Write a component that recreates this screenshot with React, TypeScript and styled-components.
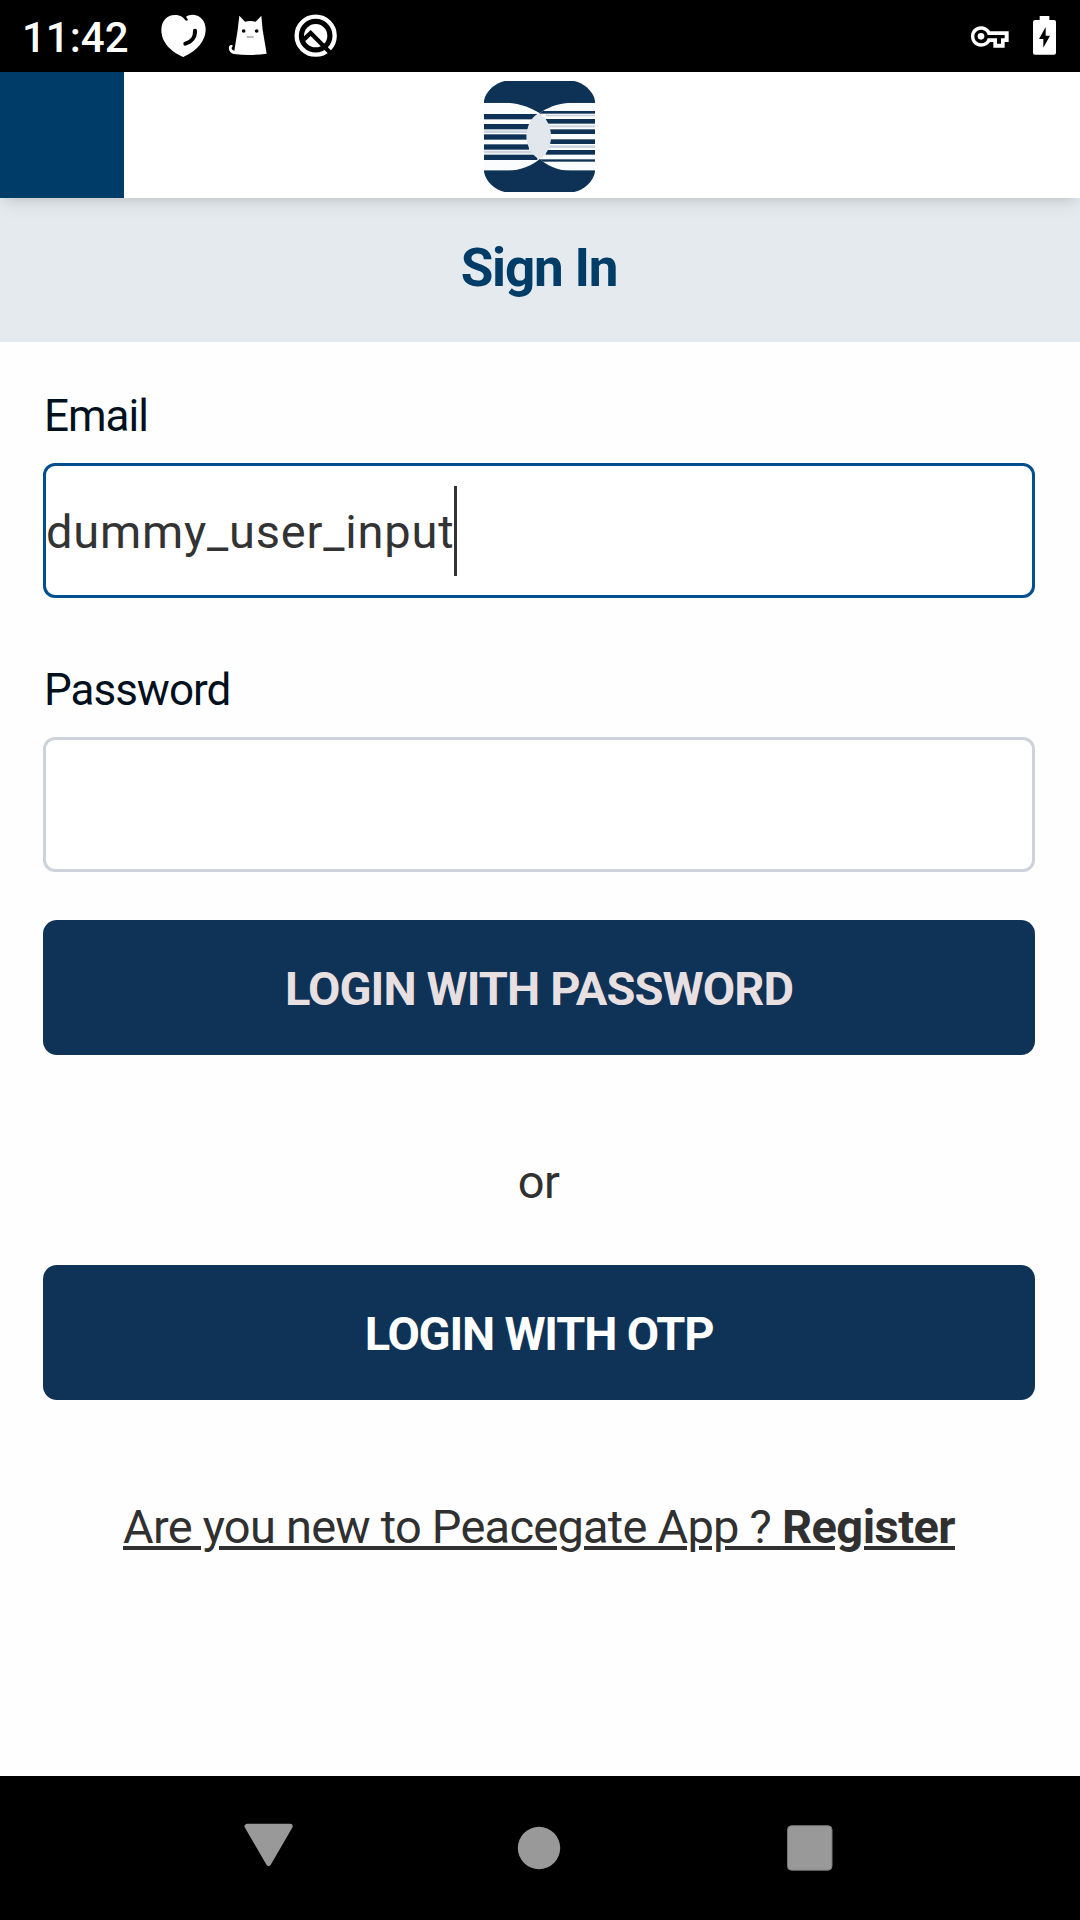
import React from "react";
import styled, { createGlobalStyle } from "styled-components";

const navy = "#0e3357";
const brand = "#003c68";

const GlobalStyle = createGlobalStyle`
  *, *::before, *::after { box-sizing: border-box; }
  body { margin: 0; background: #fff; }
`;

const Screen = styled.div`
  display: flex;
  flex-direction: column;
  width: 1080px;
  height: 1920px;
  overflow: hidden;
  background: #fefefe;
  color: #303030;
  font-family: Roboto, "Open Sans", sans-serif;
`;

const StatusBar = styled.div`
  display: flex;
  align-items: center;
  justify-content: space-between;
  flex: none;
  height: 72px;
  padding: 0 23px 0 22px;
  background: #000;
`;

const StatusGroup = styled.div<{ $gap: number }>`
  display: flex;
  align-items: center;
  gap: ${(p) => p.$gap}px;
`;

const Clock = styled.span`
  width: 114px;
  padding-top: 3px;
  color: #fff;
  font: 500 42px/50px Roboto, sans-serif;
`;

const Glyph = styled.svg`
  display: block;
  flex: none;
  overflow: visible;
`;

const Header = styled.header`
  position: relative;
  z-index: 1;
  display: grid;
  grid-template-columns: 124.4px 1fr 124.4px;
  flex: none;
  height: 126px;
  background: #fff;
  box-shadow: 0 10px 16px -3px rgba(0, 0, 0, 0.08), 0 5px 10px -5px rgba(0, 0, 0, 0.1);
`;

const MenuBlock = styled.div`
  background: ${brand};
`;

const LogoSlot = styled.div`
  display: flex;
  justify-content: center;
  padding: 9px 1px 0 0;
`;

const Banner = styled.div`
  display: flex;
  align-items: center;
  justify-content: center;
  flex: none;
  height: 144px;
  padding: 0 2px 4px 0;
  background: #e5eaee;
`;

const Title = styled.h1`
  margin: 0;
  color: ${brand};
  font-size: 53px;
  font-weight: 700;
  letter-spacing: -1.2px;
  line-height: 70px;
`;

const Form = styled.main`
  display: flex;
  flex-direction: column;
  flex: 1;
  padding: 47px 45px 0 43px;
`;

const Field = styled.div`
  display: flex;
  flex-direction: column;
  gap: 20px;
  & + & { margin-top: 65px; }
`;

const Label = styled.label`
  height: 54px;
  padding-left: 1px;
  color: #00101d;
  font-size: 44px;
  letter-spacing: -1px;
  line-height: 54px;
`;

const InputBox = styled.div<{ $focused?: boolean }>`
  display: flex;
  align-items: center;
  height: 135px;
  border: 3px solid ${(p) => (p.$focused ? "#004f90" : "#ced3db")};
  border-radius: 12px;
  background: #fff;
`;

const Value = styled.span`
  width: 408px;
  padding-top: 2px;
  color: #333;
  font-size: 47px;
  letter-spacing: 0.8px;
  line-height: 64px;
  white-space: nowrap;
`;

const Caret = styled.span`
  width: 3px;
  height: 90px;
  background: #333;
`;

const Button = styled.button<{ $color: string; $tracking: number }>`
  height: 135px;
  padding: 1px 0 0;
  border: 0;
  border-radius: 14px;
  background: ${navy};
  color: ${(p) => p.$color};
  font-family: inherit;
  font-size: 47px;
  font-weight: 700;
  letter-spacing: ${(p) => p.$tracking}px;
`;

const LoginButton = styled(Button)`
  margin-top: 48px;
`;

const Divider = styled.div`
  margin: 97px 0 53px;
  padding-right: 1px;
  font-size: 47px;
  letter-spacing: -0.5px;
  line-height: 60px;
  text-align: center;
`;

const SignUp = styled.a`
  margin-top: 97px;
  font-size: 47px;
  letter-spacing: -0.76px;
  line-height: 60px;
  text-align: center;
  white-space: nowrap;
  text-decoration: underline;
  text-decoration-thickness: 4px;
  text-underline-offset: 3px;
`;

const Strong = styled.b`
  font-weight: 700;
  letter-spacing: -0.55px;
`;

const NavBar = styled.nav`
  display: flex;
  justify-content: space-between;
  flex: none;
  height: 144px;
  padding: 46px 247px 0 243px;
  background: #000;
`;

const Logo = () => (
  <Glyph width="111" height="111" viewBox="72 33 333 333">
    <defs>
      <filter id="soft" x="0" y="0" width="1" height="1"><feGaussianBlur stdDeviation="2" /></filter>
      <clipPath id="tile"><path d="M134 33H343C370 38 400 63 405 92V306C400 335 370 361 343 366H134C107 361 77 335 72 306V92C77 63 107 38 134 33Z" /></clipPath>
      <clipPath id="left"><path d="M72 98H142C182 100 220 116 240 130L205 200L240 266C220 284 182 302 142 302H72Z" /></clipPath>
      <clipPath id="right"><path d="M405 98H331C290 100 260 114 238 130L268 200L238 266C260 284 290 302 331 302H405Z" /></clipPath>
    </defs>
    <g clipPath="url(#tile)">
      <g filter="url(#soft)">
        <rect x="52" y="13" width="373" height="373" fill={navy} />
        <g clipPath="url(#left)">
          <rect x="72" y="98" width="175" height="204" fill="#fbfcfd" />
          {[[132, 232], [162, 207], [193, 200], [223, 207], [254, 232]].map(([y, end]) => (
            <rect key={y} x="72" y={y} width={end - 72} height="16" fill={navy} />
          ))}
          <rect x="72" y="181" width="135" height="8" fill="#cbd5df" />
          <rect x="72" y="242" width="145" height="8" fill="#cbd5df" />
        </g>
        <g clipPath="url(#right)">
          <rect x="232" y="98" width="173" height="204" fill="#fbfcfd" />
          {[[123, 8, 235], [147, 14, 257], [178, 14, 270], [208, 14, 270], [240, 14, 257], [268, 7, 235]].map(([y, h, x]) => (
            <rect key={y} x={x} y={y} width={405 - x} height={h} fill={navy} />
          ))}
          <rect x="257" y="134" width="148" height="5" fill="#cbd5df" />
          <rect x="265" y="166" width="140" height="6" fill="#cbd5df" />
          <rect x="265" y="226" width="140" height="8" fill="#cbd5df" />
        </g>
        <path d="M236 130C260 142 273 170 273 200C273 228 260 256 238 267C214 256 200 228 200 200C200 170 212 142 236 130Z" fill="#e2e7ed" />
      </g>
    </g>
  </Glyph>
);

const HeartIcon = () => (
  <Glyph width="46" height="46" viewBox="480 39 138 138">
    <path d="M550 171C522 160 484 133 484 90C484 62 502 45 524 45C538 45 550 50 556 61C560 64 565 62 563 58L558 50C563 46 570 44 579 44C602 45 617 64 617 88C617 130 580 158 550 171Z" fill="#fff" />
    <path d="M585 92C586 111 575 126 556 131" fill="none" stroke="#000" strokeWidth="12" strokeLinecap="round" />
  </Glyph>
);

const CatIcon = () => (
  <Glyph width="40" height="44" viewBox="690 42 120 132">
    <path d="M718 47L735 65Q751 61 767 65L784 47L788 90L800 161Q752 168 702 162C690 160 685 150 687 140C689 134 697 133 699 138C693 142 693 151 703 152L713 90Z" fill="#fff" />
    <circle cx="731" cy="93" r="5.5" fill="#000" />
    <circle cx="770" cy="93" r="5.5" fill="#000" />
    <path d="M740 111H761" stroke="#999" strokeWidth="4" />
  </Glyph>
);

const QIcon = () => (
  <Glyph width="44" height="44" viewBox="882 42 132 132">
    <circle cx="947" cy="107" r="57" fill="none" stroke="#fff" strokeWidth="13" />
    <circle cx="947" cy="107" r="35" fill="#fff" />
    <path d="M912 118L932 99L994 161" fill="none" stroke="#000" strokeWidth="13" />
    <path d="M923 126L933 116L957 140C944 144 929 138 923 126Z" fill="#fff" />
  </Glyph>
);

const KeyIcon = () => (
  <Glyph width="40" height="28" viewBox="90 66 120 84">
    <path d="M123 79C137 79 146 87 150 94H206V126H194V143H160V126H150C145 134 136 140 123 140C106 140 93 127 93 109C93 92 106 79 123 79Z" fill="#fff" />
    <path d="M123 89C134 89 141 96 143 105H194V115H183V131H171V115H143C141 124 134 130 123 130C112 130 103 121 103 109C103 98 112 89 123 89Z" fill="#000" />
    <circle cx="123" cy="109" r="10" fill="#fff" />
  </Glyph>
);

const BatteryIcon = () => (
  <Glyph width="25" height="42" viewBox="276 45 75 126">
    <path d="M299 48H328V60H342Q348 60 348 66V158Q348 164 342 164H285Q279 164 279 158V66Q279 60 285 60H299Z" fill="#fff" />
    <path d="M317 81L297 117H310V143L330 107H317Z" fill="#000" />
  </Glyph>
);

const BackIcon = () => (
  <Glyph width="52" height="50" viewBox="0 0 52 50">
    <path d="M4 4.300H47.200L25.600 41.500Z" fill="#999" stroke="#999" strokeWidth="5" strokeLinejoin="round" />
  </Glyph>
);

const HomeIcon = () => (
  <Glyph width="46" height="50" viewBox="0 0 46 50">
    <circle cx="22" cy="26" r="21.200" fill="#999" />
  </Glyph>
);

const RecentsIcon = () => (
  <Glyph width="48" height="50" viewBox="0 0 48 50">
    <rect x="2.500" y="3.700" width="44.500" height="44.500" rx="4" fill="#999" stroke="#777" strokeWidth="1" />
  </Glyph>
);

export default function App() {
  return (
    <Screen>
      <GlobalStyle />
      <StatusBar>
        <StatusGroup $gap={24}>
          <Clock>11:42</Clock>
          <HeartIcon />
          <CatIcon />
          <QIcon />
        </StatusGroup>
        <StatusGroup $gap={22}>
          <KeyIcon />
          <BatteryIcon />
        </StatusGroup>
      </StatusBar>
      <Header>
        <MenuBlock />
        <LogoSlot><Logo /></LogoSlot>
      </Header>
      <Banner><Title>Sign In</Title></Banner>
      <Form>
        <Field>
          <Label>Email</Label>
          <InputBox $focused><Value>dummy_user_input</Value><Caret /></InputBox>
        </Field>
        <Field>
          <Label>Password</Label>
          <InputBox />
        </Field>
        <LoginButton $color="#e8dfe0" $tracking={-0.9}>LOGIN WITH PASSWORD</LoginButton>
        <Divider>or</Divider>
        <Button $color="#fff" $tracking={-1.2}>LOGIN WITH OTP</Button>
        <SignUp>Are you new to Peacegate App ? <Strong>Register</Strong></SignUp>
      </Form>
      <NavBar>
        <BackIcon />
        <HomeIcon />
        <RecentsIcon />
      </NavBar>
    </Screen>
  );
}
